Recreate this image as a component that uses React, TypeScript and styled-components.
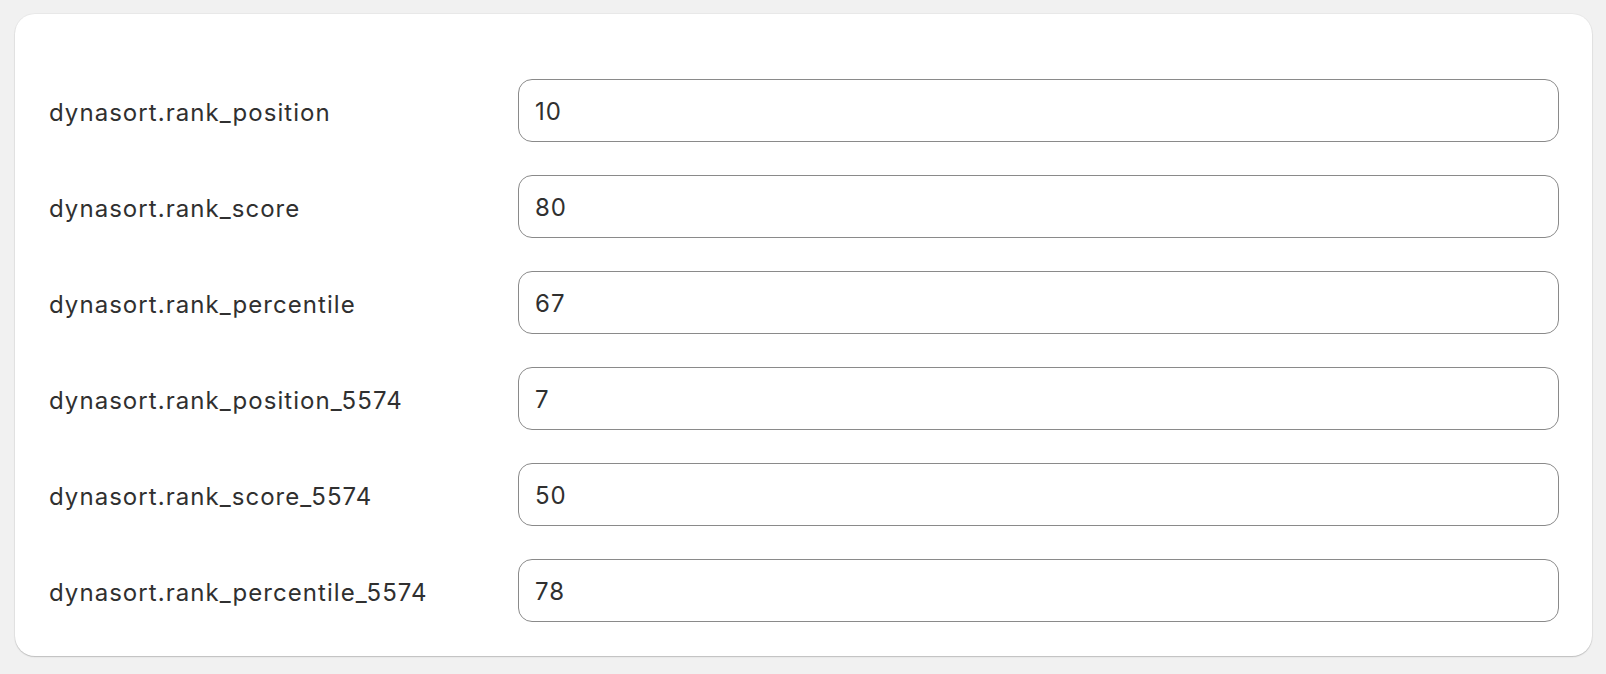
import React from "react";
import styled, { createGlobalStyle } from "styled-components";

const GlobalStyle = createGlobalStyle`
  html, body {
    margin: 0;
    padding: 0;
    background: #f1f1f1;
  }
  body {
    font-family: Inter, "Noto Sans", sans-serif;
    color: #303030;
  }
`;

// === Layout ===
const Page = styled.div`
  padding: 14px 14px 19px 15px;
`;

const Card = styled.section`
  background: #fff;
  border-radius: 20px;
  padding: 65px 33px 34px 33px;
  box-shadow: 0 1px 1px rgba(0, 0, 0, 0.12), 0 1px 2px rgba(0, 0, 0, 0.08),
    0 0 0 1px rgba(0, 0, 0, 0.03);
`;

const FieldList = styled.div`
  display: flex;
  flex-direction: column;
  gap: 33px;
`;

const Row = styled.div`
  display: grid;
  grid-template-columns: 470px 1fr;
  align-items: center;
`;

const Label = styled.label`
  font-size: 24px;
  font-weight: 400;
  letter-spacing: 1.05px;
  padding: 4px 0 0 1px;
  color: #303030;
`;

const TextField = styled.input`
  box-sizing: border-box;
  width: 100%;
  height: 63px;
  padding: 2px 16px 0;
  border: 1px solid #8a8a8a;
  border-radius: 14px;
  background: #fff;
  font-family: Inter, "Noto Sans", sans-serif;
  font-size: 24px;
  letter-spacing: 1px;
  color: #303030;
  outline: none;

  &:focus {
    border-color: #005bd3;
  }
`;

const fields = [
  { key: "dynasort.rank_position", value: "10" },
  { key: "dynasort.rank_score", value: "80" },
  { key: "dynasort.rank_percentile", value: "67" },
  { key: "dynasort.rank_position_5574", value: "7" },
  { key: "dynasort.rank_score_5574", value: "50" },
  { key: "dynasort.rank_percentile_5574", value: "78" },
];

export default function App() {
  return (
    <>
      <GlobalStyle />
      <Page>
        <Card>
          <FieldList>
            {fields.map((f) => (
              <Row key={f.key}>
                <Label htmlFor={f.key}>{f.key}</Label>
                <TextField id={f.key} defaultValue={f.value} />
              </Row>
            ))}
          </FieldList>
        </Card>
      </Page>
    </>
  );
}
